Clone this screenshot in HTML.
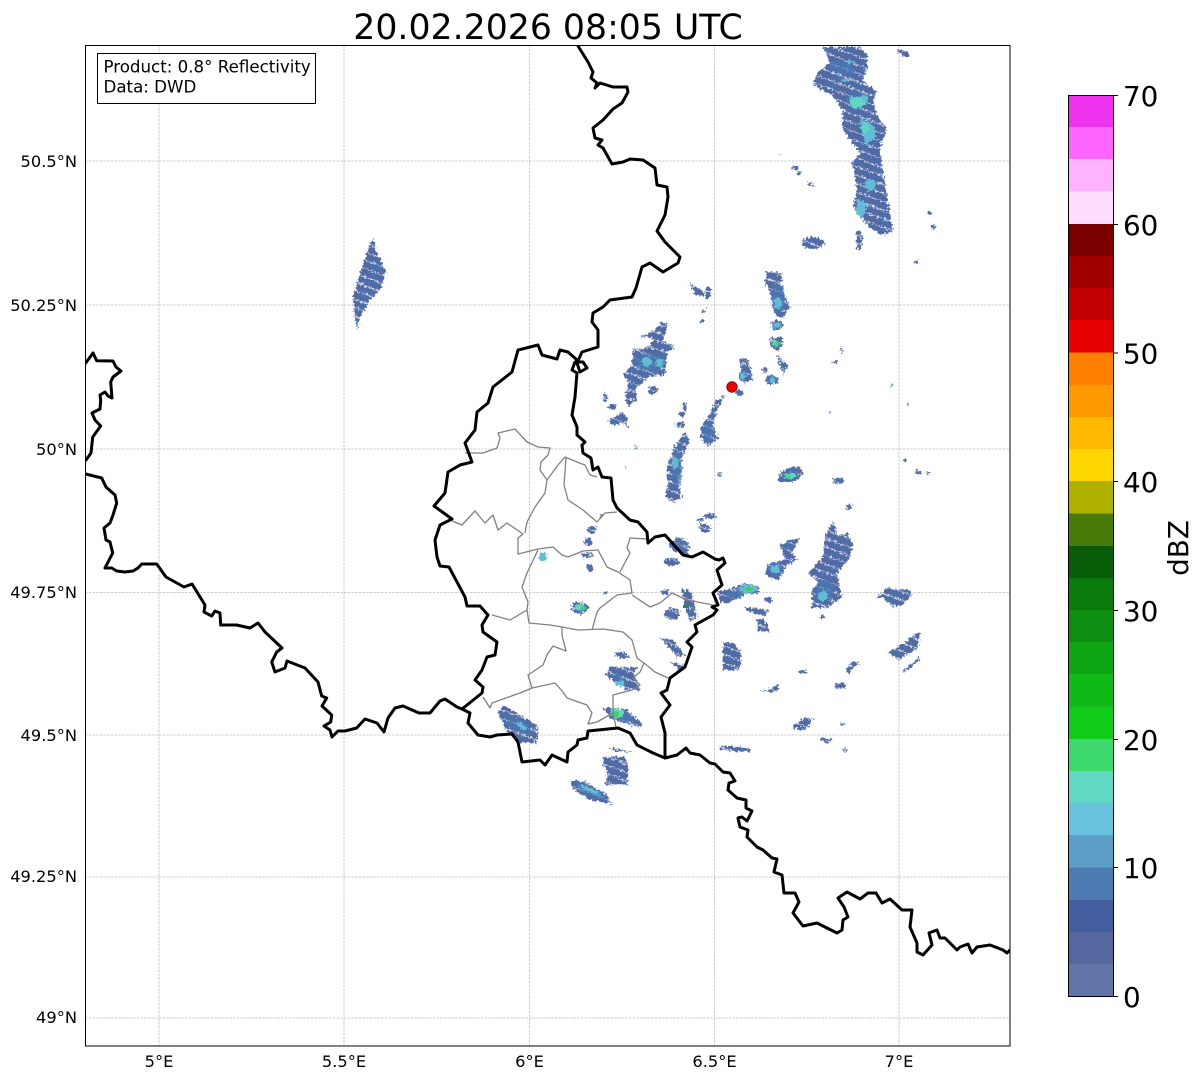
<!DOCTYPE html>
<html><head><meta charset="utf-8"><style>
html,body{margin:0;padding:0;background:#fff}
svg{display:block}
text{font-family:"DejaVu Sans","Liberation Sans",sans-serif;fill:#000}
.t{font-size:16.25px}
.tb{font-size:16.67px}
.c{font-size:27.78px}
.b{fill:none;stroke:#000;stroke-width:3;stroke-linejoin:round;stroke-linecap:round}
.g{fill:none;stroke:#808080;stroke-width:1.3;stroke-linejoin:round}
.r1{fill:url(#p)}.r2{fill:#4a77b2}.r3{fill:#62bcd6}.r4{fill:#60d8c4}.r5{fill:#3ed96e}
</style></head><body>
<svg width="1202" height="1081" viewBox="0 0 1202 1081" xmlns="http://www.w3.org/2000/svg">
<defs>
<pattern id="p" width="23" height="8" patternUnits="userSpaceOnUse" patternTransform="rotate(20)">
<rect x="0" y="0" width="23" height="7.2" fill="#516aa6"/>
<rect x="3" y="2" width="12" height="2" fill="#4a72ae"/>
<rect x="13" y="5" width="8" height="2" fill="#5a6ca2"/>
</pattern>
<filter id="j" x="-10%" y="-10%" width="120%" height="120%">
<feTurbulence type="fractalNoise" baseFrequency="0.45" numOctaves="1" seed="4" result="n"/>
<feDisplacementMap in="SourceGraphic" in2="n" scale="7" xChannelSelector="R" yChannelSelector="G"/>
</filter>
<clipPath id="ax"><rect x="85" y="45" width="925" height="1001"/></clipPath>
</defs>
<rect width="1202" height="1081" fill="#fff"/>
<text x="548" y="39" text-anchor="middle" style="font-size:34.7px">20.02.2026 08:05 UTC</text>

<g clip-path="url(#ax)">
<g stroke="#bdbdbd" stroke-width="0.8" stroke-dasharray="2.5 1.2" fill="none">
<path d="M159 45V1046M344 45V1046M529.5 45V1046M714.5 45V1046M899 45V1046"/>
<path d="M85 161H1010M85 305H1010M85 449H1010M85 592.5H1010M85 735H1010M85 877H1010M85 1018H1010"/>
</g>

<g filter="url(#j)">
<g class="r1">
<path d="M823 47L860 47L867 55L868 65L862 80L877 92L873 103L878 117L887 130L880 147L882 167L885 183L888 203L893 232L880 235L865 223L853 207L857 190L852 163L860 153L843 130L842 110L832 95L813 85L817 73L830 63Z"/>
<path d="M373 238L376 250L386 272L380 290L370 300L360 318L357 330L354 312L353 297L361 270L367 252Z"/>
<path d="M662 321L668 325L663 340L675 347L667 352L665 375L650 376L643 382L635 390L637 400L628 407L625 397L628 382L623 375L632 365L633 348L643 350L652 343L653 338L640 337L655 330Z"/>
<ellipse cx="653" cy="390" rx="5" ry="4"/><ellipse cx="612" cy="407" rx="4" ry="3"/><ellipse cx="605" cy="397" rx="2" ry="5"/>
<path d="M609 420L622 412L627 418L628 428L623 423L612 425Z"/>
<path d="M688 282L703 291L704 296L696 295Z"/><ellipse cx="708" cy="293" rx="3" ry="6"/><path d="M700 313L708 307L705 312Z"/><ellipse cx="702" cy="321" rx="2" ry="2"/>
<ellipse cx="680" cy="425" rx="5" ry="3"/><ellipse cx="685" cy="407" rx="2" ry="4"/><ellipse cx="682" cy="414" rx="3" ry="3"/>
<path d="M678 442L685 432L690 440L683 457L680 470L678 483L682 497L673 502L665 497L668 483L667 467L673 450Z"/>
<path d="M725 395L717 410L713 425L718 438L708 447L700 437L702 425L710 413L715 402Z"/>
<path d="M738 360L747 358L752 373L753 380L743 383L738 378L742 367Z"/><ellipse cx="739" cy="393" rx="4" ry="3"/>
<path d="M767 272L777 272L783 275L780 283L790 307L783 318L775 315L770 293L765 282Z"/>
<ellipse cx="777" cy="325" rx="6" ry="5"/>
<path d="M769 338L782 337L783 345L777 352L770 345Z"/>
<path d="M777 355L788 365L783 375L778 360Z"/>
<ellipse cx="772" cy="380" rx="6" ry="5"/><ellipse cx="765" cy="370" rx="3" ry="3"/>
<ellipse cx="790" cy="475" rx="13" ry="7" transform="rotate(-20 790 475)"/>
<ellipse cx="838" cy="481" rx="6" ry="3"/><ellipse cx="720" cy="474" rx="3" ry="2"/><ellipse cx="849" cy="507" rx="3" ry="2"/>
<ellipse cx="842" cy="350" rx="1.5" ry="3"/><ellipse cx="835" cy="362" rx="3" ry="1.5"/>
<ellipse cx="710" cy="516" rx="6" ry="3"/><ellipse cx="700" cy="520" rx="3" ry="2"/><ellipse cx="705" cy="528" rx="6" ry="4"/>
<path d="M668 545L677 537L688 542L690 550L685 555L675 552Z"/><ellipse cx="672" cy="562" rx="8" ry="4"/>
<ellipse cx="665" cy="592" rx="4" ry="3"/><path d="M681 589L690 590L695 608L697 618L690 622L686 610Z"/><ellipse cx="672" cy="614" rx="8" ry="6"/>
<path d="M717 592L737 587L743 583L760 587L758 593L743 595L728 603L720 602Z"/>
<ellipse cx="768" cy="600" rx="4" ry="3"/><path d="M743 607L770 610L765 616L750 612Z"/><path d="M757 618L765 620L770 632L758 631Z"/>
<path d="M765 572L770 563L785 560L783 553L780 545L790 540L800 538L792 553L798 560L788 565L778 580L768 578Z"/>
<path d="M833 520L837 535L847 533L853 543L850 558L837 573L842 597L827 608L812 608L812 590L818 582L808 573L823 557L825 537Z"/>
<ellipse cx="822" cy="617" rx="3" ry="2"/>
<path d="M876 599L887 588L910 590L912 595L903 605L892 607L883 597Z"/>
<path d="M888 653L920 632L918 648L898 660Z"/><path d="M902 672L918 657L920 660L905 672Z"/>
<path d="M723 643L733 643L740 650L741 666L738 670L723 670Z"/>
<ellipse cx="803" cy="672" rx="5" ry="2"/><path d="M760 692L772 688L778 684L779 690L770 692Z"/>
<path d="M846 668L853 661L859 663L848 673Z"/><ellipse cx="840" cy="686" rx="6" ry="3"/>
<path d="M792 727L803 718L813 718L808 728L800 730Z"/>
<ellipse cx="843" cy="724" rx="3" ry="1.5"/><ellipse cx="826" cy="740" rx="6" ry="2"/><ellipse cx="845" cy="750" rx="3" ry="1.5"/>
<path d="M719 746L732 746L750 748L751 751L735 752L720 749Z"/>
<path d="M660 638L673 640L685 655L678 657Z"/><path d="M670 662L686 665L680 670Z"/>
<ellipse cx="622" cy="655" rx="8" ry="3" transform="rotate(15 622 655)"/>
<path d="M605 675L610 667L638 668L633 673L640 690L627 690L617 683Z"/>
<path d="M603 708L617 708L627 710L642 723L640 728L610 718Z"/>
<path d="M497 712L503 705L537 725L538 738L535 743L520 742L508 733Z"/>
<path d="M610 748L633 752L628 752L612 750Z"/>
<path d="M603 757L625 757L628 770L627 785L605 785L608 770L603 767Z"/>
<path d="M572 780L587 782L607 795L613 804L590 800L572 788Z"/>
<ellipse cx="592" cy="530" rx="5" ry="4"/><ellipse cx="588" cy="542" rx="4" ry="4"/><ellipse cx="588" cy="555" rx="6" ry="3"/><ellipse cx="590" cy="568" rx="3" ry="4"/><ellipse cx="601" cy="516" rx="2" ry="2"/>
<ellipse cx="580" cy="608" rx="9" ry="6"/><ellipse cx="605" cy="593" rx="2" ry="1.5"/>
<ellipse cx="903" cy="53" rx="7" ry="2.5" transform="rotate(25 903 53)"/>
<ellipse cx="795" cy="168" rx="4" ry="2"/><ellipse cx="799" cy="173" rx="2" ry="2"/><ellipse cx="812" cy="185" rx="5" ry="1.5" transform="rotate(30 812 185)"/>
<ellipse cx="813" cy="243" rx="11" ry="6"/><ellipse cx="859" cy="240" rx="3" ry="10"/>
<ellipse cx="930" cy="213" rx="2" ry="1.5"/><ellipse cx="933" cy="227" rx="2" ry="2"/><ellipse cx="917" cy="262" rx="2" ry="2"/>
<ellipse cx="780" cy="155" rx="1.5" ry="1"/><ellipse cx="891" cy="385" rx="1" ry="1"/><ellipse cx="908" cy="405" rx="1" ry="1"/><ellipse cx="830" cy="413" rx="1" ry="1"/>
<ellipse cx="918" cy="472" rx="3" ry="2"/><ellipse cx="928" cy="473" rx="2" ry="2"/><ellipse cx="905" cy="460" rx="2" ry="1"/>
<ellipse cx="636" cy="447" rx="1" ry="2"/><ellipse cx="626" cy="467" rx="1" ry="1.5"/>
</g>
<g class="r2" fill-opacity="0.75">
<ellipse cx="650" cy="362" rx="15" ry="9"/><ellipse cx="677" cy="470" rx="5" ry="18"/>
<ellipse cx="708" cy="430" rx="5" ry="9"/><ellipse cx="778" cy="298" rx="7" ry="15"/>
<ellipse cx="790" cy="475" rx="9" ry="4" transform="rotate(-20 790 475)"/>
<ellipse cx="735" cy="595" rx="12" ry="4" transform="rotate(-15 735 595)"/>
<ellipse cx="775" cy="568" rx="8" ry="6"/><ellipse cx="786" cy="547" rx="5" ry="3"/>
<ellipse cx="519" cy="726" rx="14" ry="6" transform="rotate(33 519 726)"/>
<ellipse cx="620" cy="680" rx="8" ry="4" transform="rotate(30 620 680)"/>
<ellipse cx="622" cy="715" rx="14" ry="5" transform="rotate(25 622 715)"/>
<ellipse cx="592" cy="792" rx="16" ry="4" transform="rotate(25 592 792)"/>
<ellipse cx="770" cy="380" rx="4" ry="4"/><ellipse cx="743" cy="375" rx="4" ry="5"/>
<ellipse cx="680" cy="543" rx="7" ry="4"/><ellipse cx="580" cy="608" rx="6" ry="4"/>
<ellipse cx="842" cy="68" rx="14" ry="7" transform="rotate(15 842 68)"/>
<ellipse cx="825" cy="590" rx="10" ry="10"/>
</g>
<g class="r3">
<path d="M848 98L867 95L868 103L855 110Z"/>
<ellipse cx="845" cy="80" rx="4" ry="1.500"/><ellipse cx="850" cy="62" rx="5" ry="1.500"/>
<path d="M860 118L873 125L876 136L866 146L862 132Z"/>
<path d="M858 198L868 205L862 218L855 212Z"/>
<ellipse cx="870" cy="185" rx="6" ry="6"/>
<ellipse cx="647" cy="362" rx="5" ry="5"/><ellipse cx="660" cy="363" rx="4" ry="4"/>
<ellipse cx="675" cy="463" rx="3" ry="6"/><ellipse cx="778" cy="303" rx="4" ry="6"/>
<ellipse cx="777" cy="325" rx="4" ry="3"/><ellipse cx="743" cy="376" rx="3" ry="3"/>
<ellipse cx="772" cy="380" rx="3" ry="3"/><ellipse cx="775" cy="569" rx="5" ry="4"/>
<ellipse cx="823" cy="596" rx="5" ry="5"/><ellipse cx="748" cy="589" rx="10" ry="4"/>
<ellipse cx="543" cy="557" rx="4" ry="5"/><ellipse cx="620" cy="683" rx="5" ry="3"/>
<ellipse cx="522" cy="726" rx="6" ry="2.5" transform="rotate(33 522 726)"/>
<ellipse cx="590" cy="790" rx="12" ry="2" transform="rotate(25 590 790)"/>
</g>
<g class="r4">
<ellipse cx="857" cy="103" rx="8" ry="5"/><ellipse cx="865" cy="128" rx="4" ry="5"/>
<ellipse cx="790" cy="476" rx="6" ry="3"/><ellipse cx="617" cy="713" rx="7" ry="5"/>
<ellipse cx="580" cy="607" rx="5" ry="3"/><ellipse cx="775" cy="343" rx="3" ry="3"/>
</g>
</g>
<g class="r5">
<ellipse cx="749" cy="589" rx="4" ry="2" fill="#2fd84f"/>
<ellipse cx="616" cy="714" rx="3" ry="3" fill="#30d85a"/>
<ellipse cx="583" cy="608" rx="3" ry="2"/>
<ellipse cx="777" cy="344" rx="2" ry="3"/>
<ellipse cx="788" cy="477" rx="3" ry="1.5"/>
<rect x="683" y="605" width="6" height="3" fill="#2e8b30"/>
</g>

<path class="g" d="M465 453L483 453L497 448L500 438L498 433L515 429L527 442L538 447L550 448L548 455L541 462L540 470L547 480L545 493L535 507L527 522L525 533"/>
<path class="g" d="M452 521L462 525L475 511L485 523L493 515L498 530L507 523L523 534L518 538L518 554L538 549L553 547L562 555L568 557L583 551L598 550L607 567L618 572L630 580L632 593L617 595L600 608L597 612L592 630"/>
<path class="g" d="M547 480L558 465L565 457L577 462L585 465L590 475L597 477"/>
<path class="g" d="M566 458L564 485L568 500L583 510L597 522L605 513L617 512"/>
<path class="g" d="M647 539L630 538L627 548L630 553L620 572"/>
<path class="g" d="M632 595L650 607L660 603L672 593L687 600L713 605"/>
<path class="g" d="M538 550L527 573L522 587L528 602L527 610L510 620L492 615"/>
<path class="g" d="M527 610L529 623L550 625L562 627L578 630L603 629L623 632L632 640L637 658L644 663L655 672L668 678"/>
<path class="g" d="M562 627L562 635L566 651L553 646L547 655L543 665L528 675L532 688"/>
<path class="g" d="M483 697L490 708L492 703L520 693L532 688L555 683L563 692L567 698L587 705L592 713L588 724L597 722L613 713L616 727"/>
<path class="g" d="M613 713L613 695L632 690L640 685L633 678L640 672L644 663"/>

<path class="b" d="M85.7 363L93 353L96.7 360.7L113 361L116 367L121 371L113 377L110.7 382L112 398L108 396L105 392L100 395L100.7 400L100 409L92 413L95 420L100.7 426L92.7 437L91 453L86 460"/>
<path class="b" d="M85.7 474L101.7 478L106 487L115 495L116.7 503L113 515L110 523L104 528L106 540L110 542L112.7 553L105 568L111.7 568L116.7 571L125 572L133 571L138 568L141.7 564L156.7 564L166 577L184 587L192 584L205 605L204 612L211.7 616L215 611L220 613L220.7 625L236.7 625L250 628L258 623L265 632L282 648L276.7 652L271.7 662L275 672L285 668L287 661L305 668L318 682L321.7 696L326.7 698L322 706L331.7 715L330.7 722L324 726L330 730L332 737L338 731L345 731L356.7 728L365 719L377 723L384 732L388 718L395 708L403 706L419 713L430 713L440 701L445 699L457 707L462 709L470 713L468 723L478 735L490 737L497 735L512 734L518 742L522 762L540 760L545 765L552 755L567 762L568 752L577 745L578 740L587 738L588 731L618 728L630 733L637 745L653 753L665 758L677 755L686 748L690 753L700 755L710 763L715 764L723 772L730 773L735 781L729 783L728 790L737 798L746 800L746 808L752 811L747 821L742 817L738 818L740 827L748 830L747 837L757 847L763 850L772 858L777 859L774 872L782 875L784 893L795 893L799 902L793 913L803 926L817 923L837 933L842 930L843 920L848 917L844 907L838 898L847 892L860 899L868 893L876 893L882 903L890 899L902 910L912 910L910 927L917 943L917 952L923 955L932 945L929 933L937 930L940 938L945 938L957 950L960 947L968 944L972 953L977 947L990 945L1003 950L1007 953L1010 950"/>
<path class="b" d="M665 758L665 733L661 717L670 705L661 693L667 690L670 678L685 667L692 647L687 642L697 632L695 625L713 615L717 610L712 607L718 605L713 593L722 585L717 570L725 563L723 558L719 560L715 559L703 552L692 557L683 555L665 535L655 537L648 543L647 532L638 522L630 520L617 508L613 500L611 478L602 477L598 467L593 470L591 458L583 453L582 445L585 442L577 435L577 427L572 415L575 397L577 373L572 370L575 362L583 362L587 368L580 372L577 363L582 352L598 347L598 330L592 322L593 313L603 307L610 300L632 297L636 288L642 267L650 263L663 272L678 263L680 257L665 242L657 231L665 215L668 197L667 187L657 185L655 168L643 160L630 159L623 162L612 164L603 148L598 145L602 140L595 138L593 128L603 120L613 109L622 103L628 92L627 87L613 87L600 83L595 88L597 83L591 78L593 72L588 62L578 46"/>
<path class="b" d="M577 360L568 352L560 350L557 359L542 355L538 345L518 350L512 372L493 387L488 403L477 412L475 430L465 443L472 462L460 465L448 472L445 493L434 506L452 519L440 525L435 540L437 557L440 566L449 567L465 597L467 606L480 606L488 615L482 625L483 632L497 642L495 655L487 657L482 670L475 680L483 687L482 693L462 709"/>

<circle cx="732" cy="387" r="5.2" fill="#f00000" stroke="#7a1010" stroke-width="1"/>
</g>

<rect x="85.500" y="45.500" width="924.500" height="1000.500" fill="none" stroke="#000" stroke-width="1"/>

<rect x="97.500" y="53.500" width="218" height="50" fill="#fff" stroke="#000" stroke-width="1"/>
<text x="103.500" y="72.500" class="tb">Product: 0.8° Reflectivity</text>
<text x="103.500" y="92.500" class="tb">Data: DWD</text>

<g class="t" text-anchor="end">
<text x="77" y="167">50.5°N</text>
<text x="77" y="311">50.25°N</text>
<text x="77" y="455">50°N</text>
<text x="77" y="598">49.75°N</text>
<text x="77" y="741">49.5°N</text>
<text x="77" y="882">49.25°N</text>
<text x="77" y="1023">49°N</text>
</g>
<g class="t" text-anchor="middle">
<text x="159" y="1067">5°E</text>
<text x="344" y="1067">5.5°E</text>
<text x="529.500" y="1067">6°E</text>
<text x="714.500" y="1067">6.5°E</text>
<text x="899" y="1067">7°E</text>
</g>

<g shape-rendering="crispEdges">
<rect x="1068" y="95" width="45" height="33" fill="#ee33ee"/>
<rect x="1068" y="127" width="45" height="33" fill="#ff66ff"/>
<rect x="1068" y="159" width="45" height="33" fill="#ffb3ff"/>
<rect x="1068" y="191.500" width="45" height="33" fill="#ffddff"/>
<rect x="1068" y="224" width="45" height="33" fill="#7a0000"/>
<rect x="1068" y="256" width="45" height="33" fill="#a00000"/>
<rect x="1068" y="288" width="45" height="33" fill="#c00000"/>
<rect x="1068" y="320" width="45" height="33" fill="#e60000"/>
<rect x="1068" y="352.500" width="45" height="33" fill="#ff7f00"/>
<rect x="1068" y="385" width="45" height="33" fill="#ff9900"/>
<rect x="1068" y="417" width="45" height="33" fill="#ffb900"/>
<rect x="1068" y="449" width="45" height="33" fill="#ffd700"/>
<rect x="1068" y="481" width="45" height="33" fill="#b0b000"/>
<rect x="1068" y="513.500" width="45" height="33" fill="#4a7a08"/>
<rect x="1068" y="546" width="45" height="33" fill="#085c08"/>
<rect x="1068" y="578" width="45" height="33" fill="#0a7a0e"/>
<rect x="1068" y="610" width="45" height="33" fill="#0c8f10"/>
<rect x="1068" y="642" width="45" height="33" fill="#0ea512"/>
<rect x="1068" y="674" width="45" height="33" fill="#10b818"/>
<rect x="1068" y="706.500" width="45" height="33" fill="#10cc18"/>
<rect x="1068" y="739" width="45" height="33" fill="#3ed96e"/>
<rect x="1068" y="771" width="45" height="33" fill="#60d8c4"/>
<rect x="1068" y="803" width="45" height="33" fill="#66c2de"/>
<rect x="1068" y="835" width="45" height="33" fill="#5a9ec6"/>
<rect x="1068" y="867.500" width="45" height="33" fill="#4c7cb2"/>
<rect x="1068" y="900" width="45" height="32.500" fill="#445fa0"/>
<rect x="1068" y="932" width="45" height="32.500" fill="#54679f"/>
<rect x="1068" y="964" width="45" height="32" fill="#6374a8"/>
</g>
<rect x="1068.500" y="95.500" width="45" height="901" fill="none" stroke="#000" stroke-width="1"/>
<path d="M1113 95.500h5M1113 224.500h5M1113 353h5M1113 481.500h5M1113 610.500h5M1113 739.500h5M1113 867.500h5M1113 996.500h5" stroke="#000" stroke-width="1"/>
<g class="c">
<text x="1123" y="106">70</text>
<text x="1123" y="235">60</text>
<text x="1123" y="363.500">50</text>
<text x="1123" y="492">40</text>
<text x="1123" y="621">30</text>
<text x="1123" y="750">20</text>
<text x="1123" y="878">10</text>
<text x="1123" y="1007">0</text>
</g>
<text class="c" transform="translate(1188 548) rotate(-90)" text-anchor="middle">dBZ</text>
</svg>
</body></html>
